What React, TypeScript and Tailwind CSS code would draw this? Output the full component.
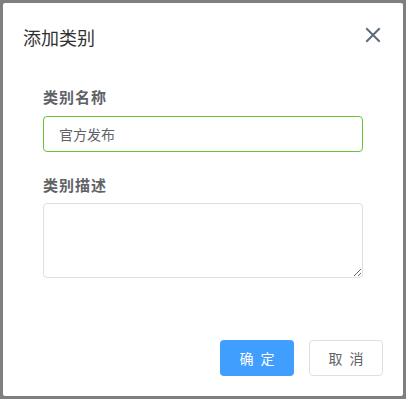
import React from "react";

export default function App() {
  return (
    <div
      className="w-[406px] h-[399px] bg-[#7f7f7f] p-[3px] overflow-hidden"
      style={{ fontFamily: '"Noto Sans CJK SC", "Noto Sans", sans-serif' }}
    >
      <div className="w-[400px] h-[393px] bg-white rounded-[2px] flex flex-col">
        <div className="flex items-center justify-between px-[20px] pt-[20px] pb-[10px] h-[57px]">
          <span className="text-[18px] leading-[24px] text-[#303133]">添加类别</span>
          <svg width="16" height="16" viewBox="0 0 16 16" className="mr-[2px] mt-[-4px]">
            <path d="M2 2 L14 14 M14 2 L2 14" stroke="#5d6b79" strokeWidth="2" strokeLinecap="square" />
          </svg>
        </div>
        <div className="px-[40px] pt-[27px] flex flex-col">
          <label className="text-[15px] leading-[20px] font-semibold text-[#606266] tracking-[1px]">类别名称</label>
          <div className="mt-[9px] h-[36px] w-[320px] border border-[#67c23a] rounded-[4px] flex items-center px-[15px] text-[14px] text-[#606266]">
            官方发布
          </div>
          <label className="mt-[23px] text-[15px] leading-[20px] font-semibold text-[#606266] tracking-[1px]">类别描述</label>
          <textarea className="mt-[8px] h-[75px] w-[320px] border border-[#dcdfe6] rounded-[4px] px-[15px] py-[5px] text-[14px] outline-none resize-y" />
        </div>
        <div className="mt-auto flex justify-end gap-[15px] px-[20px] pb-[20px]">
          <button className="w-[74px] h-[36px] rounded-[4px] bg-[#409eff] text-white text-[14px] tracking-[2px] pl-[2px]">确 定</button>
          <button className="w-[74px] h-[36px] rounded-[4px] bg-white border border-[#dcdfe6] text-[#606266] text-[14px] tracking-[2px] pl-[2px]">取 消</button>
        </div>
      </div>
    </div>
  );
}
